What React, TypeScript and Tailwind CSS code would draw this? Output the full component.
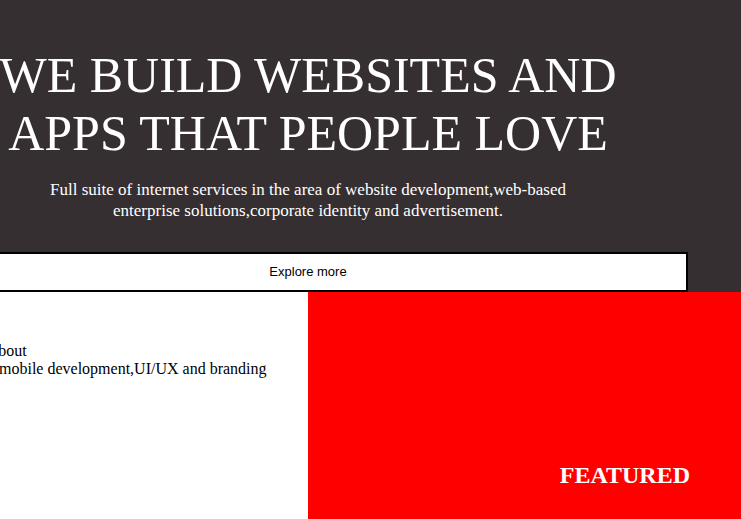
export default function App() {
  return (
    <div className="w-[741px] h-[519px] overflow-hidden bg-white" style={{ fontFamily: '"Liberation Serif", serif' }}>
      <section className="bg-[#362f31] w-full h-[292px] flex flex-col">
        <div className="ml-[-72px] w-[760px] flex flex-col items-center">
          <h1 className="mt-[46px] text-[50px] leading-[58px] text-white text-center font-normal whitespace-nowrap">
            WE BUILD WEBSITES AND<br />APPS THAT PEOPLE LOVE
          </h1>
          <p className="mt-[17px] text-[17px] leading-[21px] text-white text-center w-[540px]">
            Full suite of internet services in the area of website development,web-based enterprise solutions,corporate identity and advertisement.
          </p>
          <button
            className="mt-[31px] w-[760px] h-[40px] bg-white border-2 border-black text-[13px] text-black"
            style={{ fontFamily: '"Liberation Sans", Arial, sans-serif' }}
          >
            Explore more
          </button>
        </div>
      </section>
      <section className="flex h-[227px]">
        <div className="w-[308px] bg-white overflow-hidden">
          <p className="ml-[-61px] mt-[50px] w-[400px] text-[16px] leading-[18px] text-black">
            Tell me about<br />Web and mobile development,UI/UX and branding
          </p>
        </div>
        <div className="flex-1 bg-[#ff0000] flex items-end justify-end pr-[51px] pb-[26px]">
          <h2 className="text-[24px] font-bold text-white">FEATURED</h2>
        </div>
      </section>
    </div>
  );
}
